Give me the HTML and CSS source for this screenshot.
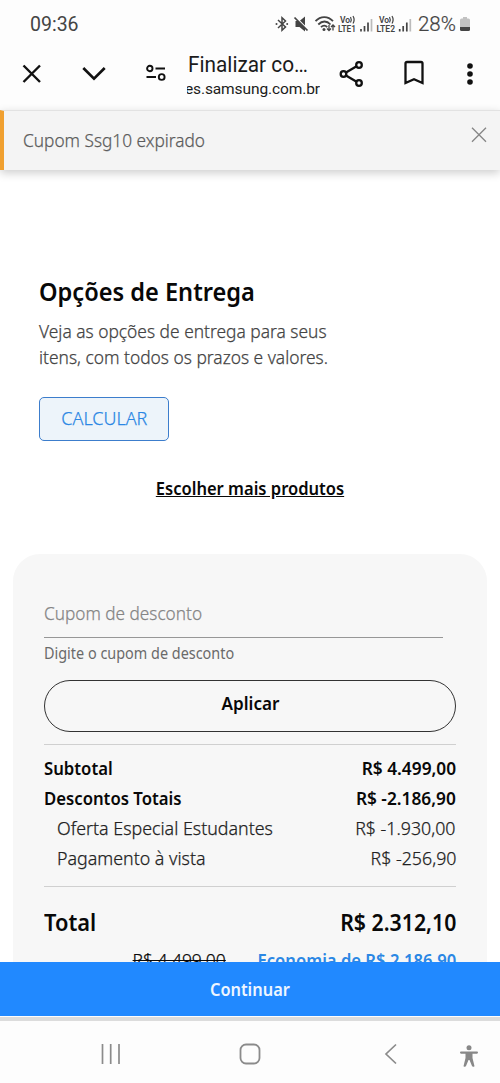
FILE: index.html
```html
<!DOCTYPE html>
<html lang="pt-BR">
<head>
<meta charset="utf-8">
<meta name="viewport" content="width=device-width, initial-scale=1">
<title>Finalizar compra</title>
<link rel="stylesheet" href="styles.css">
</head>
<body>
<div class="phone">
  <div class="status">
    <span class="clock">09:36</span>
    <svg class="status-icons" width="140" height="24" viewBox="0 0 140 24" fill="none" stroke="#444" stroke-width="1.500">
      <path d="M4 8l7.500 7L8 18.300V5.700L11.500 9 4 16"/>
      <circle cx="2.500" cy="12" r="1" fill="#444" stroke="none"/><circle cx="13.200" cy="12" r="1" fill="#444" stroke="none"/>
      <path d="M21.500 9h4l5.500-4.500v15L25.500 15h-4z" fill="#444" stroke="none"/>
      <path d="M21 4.500L35 18.500" stroke="#fdfdfd" stroke-width="1.500"/><path d="M20.500 5.500l13 13" stroke-width="1.700"/>
      <path d="M41.500 9.200c5-5.500 12.500-5.500 17.500 0M44.300 12.500c4-4 8.500-4 12.200 0M47 15.200c2-2 4.500-2 6.200 0" stroke-width="1.800"/>
      <circle cx="50" cy="17.500" r="1.500" fill="#444" stroke="none"/>
      <path d="M55 13v5.500M53 16.500l2 2 2-2M59 18.500V13M57 15l2-2 2 2" stroke-width="1.300"/>
      <g class="lte" fill="#444" stroke="none">
        <text x="66" y="10.500" textLength="10">Vo</text><text x="64" y="19.500" textLength="18" lengthAdjust="spacingAndGlyphs">LTE1</text>
        <text x="105" y="10.500" textLength="10">Vo</text><text x="102.500" y="19.500" textLength="18.500" lengthAdjust="spacingAndGlyphs">LTE2</text>
      </g>
      <path d="M76.500 5q1.500 2.700 0 5.500M79 4q2.200 3.700 0 7.500M115.500 5q1.500 2.700 0 5.500M118 4q2.200 3.700 0 7.500" stroke-width="1.200"/>
      <path d="M87 17V19.500M90.500 14v5.500M94 10.500v9M125.700 17V19.500M129.200 14v5.500M132.800 10.500v9" stroke-width="1.700"/>
      <path d="M97.500 7v12.500M136.300 7v12.500" stroke="#bbb" stroke-width="1.700"/>
    </svg>
    <span class="percent">28%</span>
    <svg class="battery" width="10" height="16" viewBox="0 0 10 16"><path d="M3 1h4v1.500h1.500q1.500 0 1.500 1.500v7H0V4q0-1.500 1.500-1.500H3z" fill="#c2c2c2"/><path d="M0 11h10v2.500q0 1.500-1.500 1.500h-7Q0 15 0 13.500z" fill="#444"/></svg>
  </div>

  <header class="browser">
    <svg class="ic-close" width="20" height="20" viewBox="0 0 20 20" fill="none" stroke="#111" stroke-width="2.400"><path d="M1.500 1.500l16.500 16.500M18 1.500L1.500 18"/></svg>
    <svg class="ic-down" width="24" height="16" viewBox="0 0 24 16" fill="none" stroke="#111" stroke-width="2.700"><path d="M1.300 2l10.700 10.700L22.700 2"/></svg>
    <svg class="ic-tune" width="20" height="18" viewBox="0 0 20 18" fill="none" stroke="#111" stroke-width="1.900"><circle cx="3.800" cy="4.500" r="2.700"/><path d="M9.500 4.500H19M.5 13H10"/><circle cx="15.700" cy="13" r="2.900"/></svg>
    <div class="page-id"><div class="page-title">Finalizar co…</div><div class="page-host"><span>es.samsung.com.br</span></div></div>
    <svg class="ic-share" width="26" height="28" viewBox="0 0 26 28" fill="none" stroke="#111" stroke-width="2.300"><path d="M7 12.500l11-6.500M7 15.500L18 22"/><circle cx="4.500" cy="14" r="2.800"/><circle cx="20" cy="5" r="2.800"/><circle cx="20" cy="23" r="2.800"/></svg>
    <svg class="ic-mark" width="20" height="26" viewBox="0 0 20 26" fill="none" stroke="#111" stroke-width="2.300"><path d="M1.500 23V3.500q0-1.500 1.500-1.500h14q1.500 0 1.500 1.500V23L10 19.300z"/></svg>
    <svg class="ic-more" width="6" height="22" viewBox="0 0 6 22" fill="#111"><circle cx="3" cy="3" r="2.800"/><circle cx="3" cy="11" r="2.800"/><circle cx="3" cy="19" r="2.800"/></svg>
  </header>

  <div class="alert">
    <span class="alert-text">Cupom Ssg10 expirado</span>
    <svg width="16" height="16" viewBox="0 0 16 16" fill="none" stroke="#858585" stroke-width="1.300"><path d="M1 .8l14 14M15 .8l-14 14"/></svg>
  </div>

  <main class="content">
    <section class="delivery">
      <h1 class="delivery-title">Opções de Entrega</h1>
      <p class="delivery-text">Veja as opções de entrega para seus<br>itens, com todos os prazos e valores.</p>
      <button class="calc"><span>CALCULAR</span></button>
    </section>
    <a class="more-products">Escolher mais produtos</a>
    <section class="summary">
      <div class="coupon-input"><span>Cupom de desconto</span></div>
      <div class="coupon-hint"><span>Digite o cupom de desconto</span></div>
      <button class="apply"><span>Aplicar</span></button>
      <div class="rows">
        <div class="row strong"><span>Subtotal</span><span class="value">R$ 4.499,00</span></div>
        <div class="row strong"><span>Descontos Totais</span><span class="value">R$ -2.186,90</span></div>
        <div class="row detail"><span>Oferta Especial Estudantes</span><span class="value">R$ -1.930,00</span></div>
        <div class="row detail"><span>Pagamento à vista</span><span class="value">R$ -256,90</span></div>
      </div>
      <div class="total"><span>Total</span><span class="value">R$ 2.312,10</span></div>
      <div class="savings"><s>R$ 4.499,00</s><b>Economia de R$ 2.186,90</b></div>
    </section>
  </main>

  <button class="continue"><span>Continuar</span></button>
  <nav class="nav">
    <svg class="n-recent" width="20" height="20" viewBox="0 0 20 20" stroke="#8b8b8b" stroke-width="1.700"><path d="M1.500 0v20M9.700 0v20M18 0v20"/></svg>
    <svg class="n-home" width="22" height="22" viewBox="0 0 22 22" fill="none" stroke="#8b8b8b" stroke-width="1.800"><rect x="1.500" y="1.500" width="19" height="19" rx="5.500"/></svg>
    <svg class="n-back" width="13" height="22" viewBox="0 0 13 22" fill="none" stroke="#8b8b8b" stroke-width="1.700"><path d="M12 1.500L2 11l10 9.500"/></svg>
    <svg class="n-access" width="18" height="22" viewBox="0 0 18 22" fill="#888"><circle cx="9" cy="2.700" r="2.500"/><path d="M1 6.500h16q1 0 1 1.100t-1 1.100h-4.500V13l2 8.300q-1.800 1.200-2.500-.3L9.500 15h-1L6 21q-.7 1.500-2.500.3l2-8.300V8.700H1q-1 0-1-1.100t1-1.100z"/></svg>
  </nav>
</div>
</body>
</html>
```
FILE: styles.css
```css
* { box-sizing: border-box; }
body { margin: 0; background: #fdfdfd; font-family: "Noto Sans", sans-serif; color: #080808; }
button { font: inherit; padding: 0; }
svg { display: block; flex: none; }
span, b, s, a, h1 { white-space: nowrap; }
.phone { width: 500px; height: 1083px; overflow: hidden; display: flex; flex-direction: column; }

.status { height: 47px; flex: none; display: flex; align-items: center; padding: 0 29px 0 30px; font-family: Roboto, sans-serif; color: #444; }
.clock { font-size: 19.5px; width: 244px; padding-top: 2px; }
.lte { font: 600 8.5px Roboto, sans-serif; }
.percent { font-size: 20.5px; font-weight: 300; width: 42px; margin-left: 4px; -webkit-text-stroke: .2px; }

.browser { height: 63px; flex: none; display: flex; align-items: flex-start; padding: 1px 0 0 22px; font-family: Roboto, sans-serif; color: #1b1b1b; }
.ic-close { margin-top: 16px; }
.ic-down { margin: 18px 0 0 40px; }
.ic-tune { margin: 16px 0 0 40px; }
.page-id { width: 133px; margin-left: 21px; }
.page-title { font-size: 21.5px; line-height: 28px; padding-top: 3px; transform: scaleX(.967); transform-origin: left; margin-left: 1px; }
.page-host { display: flex; justify-content: flex-end; overflow: hidden; font-size: 15.5px; line-height: 20px; }
.page-host span { letter-spacing: -.1px; }
.ic-share { margin: 12px 0 0 19px; }
.ic-mark { margin: 12px 0 0 39px; }
.ic-more { margin: 15px 0 0 43px; }

.alert { position: relative; height: 60px; flex: none; display: flex; justify-content: space-between; padding: 16px 13px 0 19px; background: #f4f4f4; border-left: 4px solid #f0a030; border-top: 1px solid #e2e2e2; box-shadow: 0 3px 9px rgba(0,0,0,.2); color: #5c5c5c; }
.alert-text { font-size: 18.5px; line-height: 26px; transform: scaleX(.933); transform-origin: left; }
.alert-text, .delivery-text, .calc, .coupon-input, .detail, .savings { font-weight: 300; -webkit-text-stroke: .25px; }

.content { flex: 1; min-height: 0; overflow: hidden; padding: 104px 13px 0; background: #fff; }
.delivery { padding: 0 26px; }
.delivery-title { margin: 0; font-size: 26px; line-height: 34px; font-weight: 600; transform: scaleX(.907); transform-origin: left; }
.delivery-text { margin: 10px 0 0; font-size: 18px; line-height: 26px; color: #444; white-space: nowrap; transform: scaleX(.965); transform-origin: left; }
.calc { display: block; width: 130px; height: 44px; margin-top: 27px; padding-bottom: 3px; border: 1px solid #3c7dcc; border-radius: 5px; background: #edf4fa; color: #2b87e4; font-size: 18.5px; }
.calc span { display: inline-block; transform: scaleX(.97); }
.more-products { display: block; margin-top: 34px; text-align: center; font-size: 17.5px; line-height: 26px; font-weight: 600; text-decoration: underline; transform: scaleX(.945); }
.summary { margin-top: 53px; height: 500px; padding: 44px 31px 0; border-radius: 27px; background: #f7f7f7; }
.coupon-input { width: 399px; height: 40px; border-bottom: 1px solid #979797; font-size: 18.5px; line-height: 30px; color: #858585; }
.coupon-input span { display: inline-block; transform: scaleX(.93); transform-origin: left; }
.coupon-hint { margin-top: 4px; font-size: 15.5px; line-height: 22px; color: #6a6a6a; }
.coupon-hint span { display: inline-block; transform: scaleX(.93); transform-origin: left; }
.apply { display: block; width: 412px; height: 52px; margin-top: 16px; padding-bottom: 7px; border: 1px solid #333; border-radius: 26px; background: none; font-size: 18px; font-weight: 600; color: #080808; }
.apply span { display: inline-block; transform: scaleX(.95); }
.rows { margin-top: 12px; padding: 8px 0 13px; border-top: 1px solid #d0d0d0; border-bottom: 1px solid #d0d0d0; }
.row { display: flex; justify-content: space-between; height: 30px; line-height: 30px; }
.row span, .total span { transform-origin: left; }
.row .value, .total .value { transform-origin: right; }
.strong { font-size: 17.8px; font-weight: 600; }
.strong span { transform: scaleX(.94); }
.strong .value { transform: scaleX(.972); }
.detail { padding-left: 13px; font-size: 18.5px; color: #222; }
.detail span { transform: scaleX(.963); }
.detail .value { transform: scaleX(.96); }
.total { display: flex; justify-content: space-between; margin-top: 19px; font-size: 23.5px; line-height: 32px; font-weight: 600; }
.total span { transform: scaleX(.93); }
.total .value { transform: scaleX(.905); }
.savings { display: flex; justify-content: flex-end; gap: 27px; margin-top: 10px; font-size: 17.5px; line-height: 24px; }
.savings b { font-weight: 600; color: #2b87e4; transform: scaleX(.95); transform-origin: right; -webkit-text-stroke: 0; }
.savings s { margin-right: -6px; }

.continue { height: 54px; flex: none; border: 0; background: #2189ff; color: #eef6ff; font-size: 18px; font-weight: 600; }
.continue span { display: inline-block; transform: scaleX(.91); }
.nav { height: 66px; flex: none; display: flex; align-items: flex-start; border-top: 4px solid #dcdcdc; margin-top: 1px; background: #fdfdfd; }
.n-recent { margin: 23px 0 0 101px; }
.n-home { margin: 22px 0 0 118px; }
.n-back { margin: 22px 0 0 123px; }
.n-access { margin: 24px 0 0 63px; }
```
